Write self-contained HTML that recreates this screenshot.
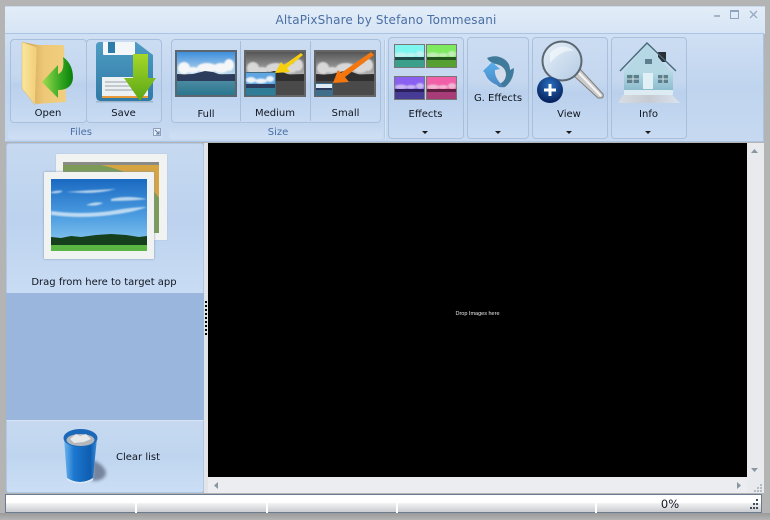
<!DOCTYPE html>
<html><head><meta charset="utf-8"><style>
html,body{margin:0;padding:0;width:770px;height:520px;overflow:hidden;background:#b4b4b4}
div{position:absolute;box-sizing:border-box}
svg{position:absolute;overflow:visible}
.t{font:10px/14px "DejaVu Sans","Liberation Sans",sans-serif;color:#10151f;text-align:center;white-space:nowrap;margin-top:2px}
.g{font:10px/14px "DejaVu Sans","Liberation Sans",sans-serif;color:#4a6fa3;text-align:center;margin-top:2px}
.b{background:linear-gradient(#cbdcf2 0,#c4d7ef 45%,#bad0ec 55%,#c8dbf3 100%);border:1px solid #a8c0dc;border-radius:4px}
.f{background:linear-gradient(#c2d6ef,#cfe0f5);border-radius:3px}
.a{width:0;height:0;border:3px solid transparent;border-top:3px solid #1a1a1a;border-bottom:0}
</style></head><body>
<svg width="0" height="0" style="position:absolute"><defs>
<filter id="bl" x="-20%" y="-20%" width="140%" height="140%"><feGaussianBlur stdDeviation=".7"/></filter>
<filter id="bl2" x="-30%" y="-30%" width="160%" height="160%"><feGaussianBlur stdDeviation="1.6"/></filter>
<linearGradient id="sky" x1="0" y1="0" x2="0" y2="1"><stop offset="0" stop-color="#3f8fdc"/><stop offset="1" stop-color="#bcd9ee"/></linearGradient>
<linearGradient id="sea" x1="0" y1="0" x2="0" y2="1"><stop offset="0" stop-color="#4a8aa0"/><stop offset="1" stop-color="#2b7690"/></linearGradient>
<linearGradient id="gsky" x1="0" y1="0" x2="0" y2="1"><stop offset="0" stop-color="#555"/><stop offset="1" stop-color="#b0b0b0"/></linearGradient>
<symbol id="land" viewBox="0 0 62 47" preserveAspectRatio="none">
<rect width="62" height="47" fill="#5c6670"/>
<rect x="2" y="2" width="58" height="22" fill="url(#sky)"/>
<g filter="url(#bl)" fill="#f4f6f8"><ellipse cx="9" cy="18" rx="6" ry="6"/><ellipse cx="18" cy="20" rx="6" ry="3"/><ellipse cx="32" cy="18" rx="10" ry="5"/><ellipse cx="46" cy="18" rx="8" ry="5"/><ellipse cx="54" cy="15" rx="5" ry="6"/></g>
<path d="M2 24L10 25 18 24 30 21 38 22 46 25 60 24V31H2Z" fill="#2c3c5c"/>
<rect x="2" y="31" width="58" height="14" fill="url(#sea)"/>
</symbol>
<symbol id="gland" viewBox="0 0 62 47" preserveAspectRatio="none">
<rect width="62" height="47" fill="#666"/>
<rect x="2" y="2" width="58" height="22" fill="url(#gsky)"/>
<g filter="url(#bl)" fill="#d8d8d8"><ellipse cx="9" cy="18" rx="6" ry="6"/><ellipse cx="18" cy="20" rx="6" ry="3"/><ellipse cx="32" cy="18" rx="10" ry="5"/><ellipse cx="46" cy="18" rx="8" ry="5"/><ellipse cx="54" cy="15" rx="5" ry="6"/></g>
<path d="M2 24L10 25 18 24 30 21 38 22 46 25 60 24V31H2Z" fill="#2f2f2f"/>
<rect x="2" y="31" width="58" height="14" fill="#4a4a4a"/>
</symbol>
<symbol id="mini" viewBox="0 0 31 24" preserveAspectRatio="none">
<rect width="31" height="24" fill="#777"/>
<rect x="1" y="1" width="29" height="13" fill="var(--c1)"/>
<g filter="url(#bl)" fill="#f0f0f0" opacity=".6"><ellipse cx="7" cy="11" rx="6" ry="2.500"/><ellipse cx="17" cy="11" rx="5" ry="2"/><ellipse cx="26" cy="10" rx="4" ry="3"/></g>
<rect x="1" y="13" width="29" height="3" fill="var(--c3)"/>
<rect x="1" y="16" width="29" height="7" fill="var(--c2)"/>
</symbol>
<linearGradient id="flap" x1="0" y1="0" x2="1" y2="0"><stop offset="0" stop-color="#f9e69c"/><stop offset="1" stop-color="#f2cd78"/></linearGradient>
<linearGradient id="back" x1="0" y1="0" x2="1" y2="0"><stop offset="0" stop-color="#c99b50"/><stop offset=".5" stop-color="#eec877"/><stop offset="1" stop-color="#f0cf80"/></linearGradient>
<linearGradient id="grn" x1="0" y1="0" x2="0" y2="1"><stop offset="0" stop-color="#a5d82a"/><stop offset="1" stop-color="#5aa516"/></linearGradient>
<linearGradient id="grn2" x1="0" y1="0" x2="1" y2="0"><stop offset="0" stop-color="#a2dc50"/><stop offset=".6" stop-color="#34a822"/><stop offset="1" stop-color="#0a7f0a"/></linearGradient>
<linearGradient id="disk" x1="0" y1="0" x2="0" y2="1"><stop offset="0" stop-color="#4f9cc4"/><stop offset="1" stop-color="#2f7aa6"/></linearGradient>
<linearGradient id="bin" x1="0" y1="0" x2="1" y2="0"><stop offset="0" stop-color="#6db5ec"/><stop offset=".3" stop-color="#1c78d0"/><stop offset=".8" stop-color="#0f5db0"/><stop offset="1" stop-color="#3a8fda"/></linearGradient>
<linearGradient id="photo" x1="0" y1="0" x2="0" y2="1"><stop offset="0" stop-color="#1a69c2"/><stop offset=".5" stop-color="#4a9be0"/><stop offset=".85" stop-color="#7fc0ec"/></linearGradient>
<linearGradient id="house" x1="0" y1="0" x2="0" y2="1"><stop offset="0" stop-color="#b7dbe6"/><stop offset="1" stop-color="#8dbccd"/></linearGradient>
<linearGradient id="glass" x1="0" y1="0" x2="1" y2="1"><stop offset="0" stop-color="#e8f0f8"/><stop offset="1" stop-color="#b3cbe4"/></linearGradient>
<radialGradient id="plus" cx=".5" cy=".3" r=".7"><stop offset="0" stop-color="#2a6fc0"/><stop offset="1" stop-color="#051e58"/></radialGradient>
<linearGradient id="shelf" x1="0" y1="0" x2="1" y2="0"><stop offset="0" stop-color="#d8dde4"/><stop offset=".5" stop-color="#c6cbd2"/><stop offset="1" stop-color="#dbe3ee"/></linearGradient>
<linearGradient id="swB" x1="0" y1="0" x2="0" y2="1"><stop offset="0" stop-color="#58b0ee"/><stop offset="1" stop-color="#4a86c0"/></linearGradient>
</defs></svg>

<!-- window -->
<div style="left:5px;top:6px;width:760px;height:28px;background:linear-gradient(#e2edf8,#d6e4f4);border-top:1px solid #c9d9ec"></div>
<div class="t" style="left:5px;top:12px;width:762px;color:#4a6fa5;font-size:12px;line-height:15px;letter-spacing:.15px;margin-top:1px">AltaPixShare by Stefano Tommesani</div>
<div style="left:714px;top:15px;width:6px;height:2px;background:#a3b3c8"></div>
<div style="left:730px;top:10px;width:9px;height:9px;border:1px solid #8fa3bd;border-top-width:2px"></div>
<svg style="left:749px;top:10px" width="9" height="9"><path d="M1 1L8 8M8 1L1 8" stroke="#99abc3" stroke-width="1.3"/></svg>

<!-- ribbon -->
<div style="left:5px;top:33px;width:759px;height:109px;background:linear-gradient(#d0e0f4,#bfd4ee 50%,#c6d9f1);border:1px solid #aac4e4;border-width:1px 1px 1px 0"></div>

<!-- Files -->
<div class="b" style="left:10px;top:39px;width:77px;height:84px"></div>
<div class="b" style="left:86px;top:39px;width:76px;height:84px"></div>
<svg style="left:20px;top:40px" width="56" height="66" viewBox="0 0 56 66">
<path d="M2 2L18 5H42Q44 5 44 7L46 62 16 64Z" fill="url(#back)"/>
<path d="M2 2L16 7Q17 7 17 9L15 65 5 52Q2 50 2 46Z" fill="url(#flap)" stroke="#dcb866" stroke-width=".5"/>
<path d="M22 42L38 25V34Q45 32 43 17Q53 24 53 38Q52 50 38 50V58Z" fill="url(#grn2)"/>
</svg>
<svg style="left:96px;top:41px" width="62" height="64" viewBox="0 0 62 64">
<path d="M0 5Q0 1 4 1H40L57 14V55Q57 60 52 60H5Q0 60 0 55Z" fill="url(#disk)"/>
<path d="M7 1H39V13Q39 14 38 14H8Q7 14 7 13Z" fill="#f4f7f9"/>
<rect x="12" y="1" width="7" height="11" fill="#2f7ba8"/>
<rect x="6" y="36" width="46" height="21" fill="#eef1f2"/>
<rect x="6" y="55" width="46" height="2" fill="#e89a3a"/>
<path d="M9 41H42M9 45H42M9 49H42" stroke="#a9b4ba" stroke-width="1.2"/>
<rect x="0" y="60" width="57" height="1.500" fill="#8aa2b5" opacity=".6"/>
<path d="M37 13H52V37H60L44 60 28 37H37Z" fill="url(#grn)"/>
</svg>
<div class="t" style="left:10px;top:105px;width:76px">Open</div>
<div class="t" style="left:86px;top:105px;width:75px">Save</div>
<div class="f" style="left:8px;top:124px;width:155px;height:15px"></div>
<div class="g" style="left:8px;top:124px;width:146px">Files</div>
<svg style="left:153px;top:128px" width="8" height="8"><rect x=".5" y=".5" width="7" height="7" fill="#e8eff8" stroke="#8ca2bf"/><path d="M2 2L6 6M6 3V6H3" stroke="#5a789f" fill="none"/></svg>

<!-- Size -->
<div class="b" style="left:171px;top:39px;width:210px;height:84px"></div>
<div style="left:240px;top:41px;width:1px;height:80px;background:#a7bedb"></div>
<div style="left:310px;top:41px;width:1px;height:80px;background:#a7bedb"></div>
<svg style="left:175px;top:50px" width="62" height="47"><use href="#land" width="62" height="47"/></svg>
<svg style="left:244px;top:50px" width="62" height="47"><use href="#gland" width="62" height="47"/>
<rect x="1" y="22" width="31" height="24" fill="#446c80"/><g transform="translate(1,22)"><rect x="1" y="1" width="29" height="11" fill="#5fa6e2"/><g filter="url(#bl)" fill="#eef3f8"><ellipse cx="6" cy="8" rx="5" ry="3"/><ellipse cx="16" cy="9" rx="6" ry="2.500"/><ellipse cx="25" cy="7" rx="4" ry="3"/></g><rect x="1" y="12" width="29" height="4" fill="#2c3c5c"/><rect x="1" y="16" width="29" height="7" fill="#2f7d96"/></g>
<path d="M31 23L37 12 40 15 57 3 59 5 43 18 46 22Z" fill="#f7cf0c"/></svg>
<svg style="left:314px;top:50px" width="62" height="47"><use href="#gland" width="62" height="47"/>
<rect x="1" y="33" width="18" height="13" fill="#3f6e8a"/><rect x="2" y="34" width="16" height="4" fill="#dcebf6"/><rect x="2" y="38" width="16" height="2" fill="#2c3c5c"/>
<path d="M19 33L24 20 27 23 57 2 60 5 31 27 35 32Z" fill="#f4760f"/></svg>
<div class="t" style="left:171px;top:106px;width:70px">Full</div>
<div class="t" style="left:240px;top:105px;width:70px">Medium</div>
<div class="t" style="left:310px;top:105px;width:71px">Small</div>
<div class="f" style="left:169px;top:124px;width:214px;height:15px"></div>
<div class="g" style="left:169px;top:124px;width:218px">Size</div>
<div style="left:384px;top:40px;width:2px;height:98px;background:#dbe7f5;border-left:1px solid #b3c9e4"></div>

<!-- Effects -->
<div class="b" style="left:388px;top:37px;width:76px;height:102px"></div>
<svg style="left:394px;top:44px;--c1:#7ff5f0;--c2:#3aa08c;--c3:#1f4a48" width="31" height="24"><use href="#mini" width="31" height="24"/></svg>
<svg style="left:426px;top:44px;--c1:#7eea60;--c2:#55a030;--c3:#24551f" width="31" height="24"><use href="#mini" width="31" height="24"/></svg>
<svg style="left:394px;top:76px;--c1:#8a60f0;--c2:#463c96;--c3:#2a1f5c" width="31" height="24"><use href="#mini" width="31" height="24"/></svg>
<svg style="left:426px;top:76px;--c1:#f05fa8;--c2:#a83c78;--c3:#5c1f40" width="31" height="24"><use href="#mini" width="31" height="24"/></svg>
<div class="t" style="left:388px;top:106px;width:75px">Effects</div>
<div class="a" style="left:422px;top:131px"></div>

<!-- G. Effects -->
<div class="b" style="left:467px;top:37px;width:62px;height:102px"></div>
<svg style="left:482px;top:56px" width="32" height="32" viewBox="0 0 32 32">
<circle cx="16" cy="16" r="13" fill="#d4dcec"/>
<path d="M5 2Q14-2 22 3 28 7 28 14L32 12Q32 24 23 31 17 32 15 29 24 26 24 18 23 10 14 8 8 7 5 2Z" fill="#3f7a9a"/>
<path d="M10 6L18 13 13 14Q12 22 22 31 6 28 3 17L1 15Z" fill="url(#swB)"/>
</svg>
<div class="t" style="left:467px;top:90px;width:62px">G. Effects</div>
<div class="a" style="left:495px;top:131px"></div>

<!-- View -->
<div class="b" style="left:532px;top:37px;width:76px;height:102px"></div>
<svg style="left:536px;top:39px" width="70" height="66" viewBox="0 0 70 66">
<path d="M39 33L44 30 67 55Q68 59 65 59L62 59 38 37Z" fill="#c9c9c9" stroke="#7d7d7d" stroke-width="1"/>
<path d="M42 33L65 57" stroke="#f5f5f5" stroke-width="2"/>
<circle cx="26" cy="22" r="19.500" fill="url(#glass)" stroke="#5c6772" stroke-width="2"/>
<path d="M14 14Q26 2 38 12 26 10 14 24Z" fill="#fff" opacity=".5"/>
<circle cx="14" cy="51" r="13" fill="url(#plus)"/>
<path d="M14 45V57M8 51H20" stroke="#fff" stroke-width="3"/>
</svg>
<div class="t" style="left:532px;top:106px;width:74px">View</div>
<div class="a" style="left:566px;top:131px"></div>

<!-- Info -->
<div class="b" style="left:611px;top:37px;width:76px;height:102px"></div>
<svg style="left:618px;top:41px" width="64" height="64" viewBox="0 0 64 64">
<path d="M5 54H54L62 62H0Z" fill="url(#shelf)"/>
<rect x="40" y="11" width="8" height="10" fill="#2b3036"/>
<rect x="6" y="30" width="49" height="19" fill="url(#house)"/>
<rect x="6" y="49" width="49" height="5" fill="#dcecf2"/>
<path d="M29 3L6 30H52Z" fill="#b6d8e4"/>
<path d="M2 30L29 2 58 30" fill="none" stroke="#456a78" stroke-width="1.400"/>
<rect x="27" y="18" width="7" height="5" fill="#5b7f8c"/>
<rect x="9" y="34" width="12" height="8" fill="#5d7f8b"/>
<rect x="40" y="34" width="10" height="8" fill="#5d7f8b"/>
<rect x="25" y="32" width="10" height="16" fill="#e0f0f5"/>
<path d="M15 34V42M9 38H21M45 34V42M40 38H50" stroke="#d2e6ed"/>
</svg>
<div class="t" style="left:611px;top:106px;width:75px">Info</div>
<div class="a" style="left:645px;top:131px"></div>

<!-- left panel -->
<div style="left:6px;top:143px;width:198px;height:151px;background:linear-gradient(#c6d9f0,#bcd2ee 50%,#c9dcf4);border-radius:3px 3px 0 0;border:1px solid #b0c8e4;border-bottom:0"></div>
<div style="left:6px;top:293px;width:198px;height:128px;background:#9ab6dc"></div>
<div style="left:6px;top:420px;width:198px;height:73px;background:linear-gradient(#c6d9f0,#bfd5ef 50%,#cbdef5);border:1px solid #b0c8e4;border-top:1px solid #d6e4f5;border-radius:0 0 3px 3px"></div>

<!-- photos -->
<div style="left:56px;top:154px;width:111px;height:86px;background:#f1f2f2;box-shadow:0 0 1px #9fb0c4;border-radius:1px"></div>
<svg style="left:63px;top:162px" width="96" height="71" viewBox="0 0 96 71">
<rect width="96" height="71" fill="#7c9a58"/><rect width="96" height="3" fill="#8a8a86"/>
<path d="M38 3H96V36Q80 12 38 3Z" fill="#d6a440"/>
</svg>
<div style="left:44px;top:172px;width:110px;height:87px;background:#f1f2f2;box-shadow:0 0 2px #8296ad;border-radius:1px"></div>
<svg style="left:51px;top:179px" width="96" height="72" viewBox="0 0 96 72">
<rect width="96" height="72" fill="url(#photo)"/>
<g filter="url(#bl)" fill="#e4f0f8" opacity=".75">
<path d="M0 32Q30 36 60 32 82 28 96 28 80 34 60 36 30 40 0 36Z"/>
<path d="M15 13Q40 11 65 10 50 14 35 14ZM35 26Q45 22 52 24 45 28 35 26ZM60 20Q75 16 96 20 80 22 60 22ZM0 13Q6 11 12 12 8 15 0 14Z"/>
</g>
<path d="M0 60V58L10 59 20 57 30 58 45 56 60 55 75 56 88 58 96 57V66H0Z" fill="#163f1d"/>
<rect y="66" width="96" height="6" fill="#5bb544"/>
</svg>
<div class="t" style="left:6px;top:274px;width:196px">Drag from here to target app</div>

<!-- splitter -->
<div style="left:204px;top:143px;width:4px;height:350px;background:#e2e4e8"></div>
<svg style="left:204px;top:300px" width="4" height="36"><path d="M2 1V35" stroke="#000" stroke-width="2" stroke-dasharray="2 2"/></svg>

<!-- bin -->
<svg style="left:60px;top:426px" width="48" height="60" viewBox="0 0 48 60">
<path d="M33 34Q46 40 46 48 44 55 32 55Z" fill="#55627a" opacity=".7" filter="url(#bl2)"/>
<path d="M4 12L7 52Q20 60 33 52L37 12Z" fill="url(#bin)"/>
<path d="M7 52Q20 60 33 52L33 54Q20 61 7 54Z" fill="#dde8f4"/>
<ellipse cx="20.500" cy="12" rx="17" ry="9" fill="#1c68b8"/>
<ellipse cx="20.500" cy="14" rx="14" ry="6" fill="#b4b8bc"/>
<path d="M10 13L16 8 20 10 26 8 31 13 24 16 14 17Z" fill="#e6e8ea"/>
</svg>
<div class="t" style="left:105px;top:449px;width:66px">Clear list</div>

<!-- viewer -->
<div style="left:208px;top:143px;width:539px;height:334px;background:#000"></div>
<div style="left:208px;top:310px;width:539px;text-align:center;color:#e8e8e8;font:5.500px/8px 'Liberation Sans',sans-serif">Drop Images here</div>

<!-- scrollbars -->
<div style="left:747px;top:143px;width:17px;height:350px;background:#e8eaed"></div>
<div style="left:208px;top:477px;width:539px;height:16px;background:#ebedf0"></div>
<svg style="left:750px;top:148px" width="9" height="6"><path d="M1 5L4.500 1 8 5Z" fill="#8a96a0"/></svg>
<svg style="left:750px;top:467px" width="9" height="6"><path d="M1 1L4.500 5 8 1Z" fill="#8a96a0"/></svg>
<svg style="left:213px;top:481px" width="6" height="9"><path d="M5 1V8L1 4.500Z" fill="#8a96a0"/></svg>
<svg style="left:736px;top:481px" width="6" height="9"><path d="M1 1V8L5 4.500Z" fill="#8a96a0"/></svg>
<svg style="left:753px;top:483px" width="10" height="10"><path d="M7 1h2v2h-2zM4 4h2v2h-2zM7 4h2v2h-2zM1 7h2v2h-2zM4 7h2v2h-2zM7 7h2v2h-2z" fill="#b4bcc4"/></svg>

<!-- status -->
<div style="left:5px;top:494px;width:757px;height:19px;background:linear-gradient(#fff 0,#fff 45%,#f0f1f2 50%,#c9ccd0 100%);border:1px solid #6b7b90"></div>
<div style="left:135px;top:503px;width:2px;height:10px;background:#fff"></div>
<div style="left:266px;top:503px;width:2px;height:10px;background:#fff"></div>
<div style="left:396px;top:503px;width:2px;height:10px;background:#fff"></div>
<div style="left:595px;top:503px;width:2px;height:10px;background:#fff"></div>
<div class="t" style="left:650px;top:497px;width:40px;font-size:11.500px;margin-top:0">0%</div>
<svg style="left:749px;top:498px" width="10" height="12"><path d="M7 1h2v2h-2zM4 5h2v2h-2zM7 5h2v2h-2zM1 9h2v2h-2zM4 9h2v2h-2zM7 9h2v2h-2z" fill="#3f4d60"/></svg>
<div style="left:0;top:513px;width:770px;height:7px;background:linear-gradient(#9a9a9a,#b4b4b4)"></div>
</body></html>
